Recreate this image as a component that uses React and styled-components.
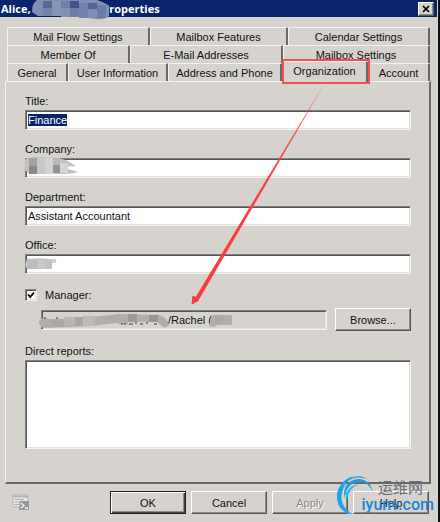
import React, { useEffect, useRef } from "react";
import styled, { createGlobalStyle, css } from "styled-components";

const GlobalStyle = createGlobalStyle`
  * {
    box-sizing: border-box;
  }
  body {
    margin: 0;
    background: #d6d3ce;
  }
  button, input, textarea {
    font: inherit;
    color: inherit;
  }
`;

const sunken = css`
  border: 1px solid;
  border-color: #808080 #f4f3f0 #f4f3f0 #808080;
  box-shadow: inset 1px 1px 0 #55585a, inset -1px -1px 0 #e4e2dd;
`;

const raised = css`
  border: 1px solid;
  border-color: #fff #55585a #55585a #fff;
  box-shadow: inset -1px -1px 0 #8c8a86;
`;

const Window = styled.div`
  position: relative;
  display: flex;
  flex-direction: column;
  min-height: 100vh;
  background: #d6d3ce;
  border-right: 2px solid #111;
  font-family: "Liberation Sans", Arial, sans-serif;
  font-size: 11px;
  line-height: 14px;
  color: #111;
  overflow: hidden;
`;

const TitleBar = styled.header`
  display: flex;
  justify-content: space-between;
  align-items: center;
  height: 17px;
  padding: 0 3px 0 1px;
  margin-right: 1px;
  background: #08246b;
`;

const Caption = styled.h1`
  display: flex;
  gap: 66px;
  margin: 0;
  font-family: "Open Sans", sans-serif;
  font-size: 11px;
  font-weight: 700;
  line-height: 16px;
  color: #fff;
`;

const CloseButton = styled.button`
  ${raised}
  display: flex;
  align-items: center;
  justify-content: center;
  width: 16px;
  height: 14px;
  padding: 0;
  background: #d6d3ce;
`;

const Tabs = styled.nav`
  padding: 10px 8px 0 7px;
`;

const TabRow = styled.div`
  display: grid;
  grid-template-columns: ${(p) => p.$columns};
`;

const Tab = styled.button`
  position: relative;
  height: 18px;
  padding: 1px 0 0;
  border: solid;
  border-width: 1px 2px 0 1px;
  border-color: #f4f3f0 #66686a #f4f3f0 #f4f3f0;
  border-radius: 2px 2px 0 0;
  background: #d6d3ce;
  line-height: 14px;
  white-space: nowrap;

  ${(p) =>
    p.$active &&
    css`
      z-index: 1;
      height: 21px;
      margin: -2px 0 -1px;
      padding-bottom: 3px;
    `}
`;

const Marker = styled.span`
  position: absolute;
  inset: -3px -4px -2px -1px;
  border: 2px solid #f25050;
`;

const Panel = styled.main`
  display: flex;
  flex-direction: column;
  flex: 1;
  margin: 0 7px 0 5px;
  padding: 12px 18px 33px 19px;
  border: solid;
  border-width: 1px 2px 2px 1px;
  border-color: #f4f3f0 #66686a #66686a #f4f3f0;
`;

const Field = styled.div`
  display: flex;
  flex-direction: column;
  gap: 2px;
  margin-bottom: 12px;
`;

const Label = styled.label`
  line-height: 14px;
`;

const TextBox = styled.input`
  ${sunken}
  width: 100%;
  height: 20px;
  padding: 1px 2px;
  background: ${(p) => (p.readOnly ? "#d6d3ce" : "#fff")};
  outline: none;

  &::selection {
    background: #08246b;
    color: #fff;
  }
`;

const CheckRow = styled.div`
  display: flex;
  align-items: center;
  gap: 8px;
  height: 14px;
  margin-top: 2px;
`;

const CheckBox = styled.input`
  ${sunken}
  appearance: none;
  width: 12px;
  height: 12px;
  margin: 0;
  background: #fff;

  &:checked {
    background: #fff
      url("data:image/svg+xml,%3Csvg xmlns='http://www.w3.org/2000/svg' viewBox='0 0 10 10'%3E%3Cpath d='M2 4.5 4.2 7 8 2.5' fill='none' stroke='%23000' stroke-width='1.8'/%3E%3C/svg%3E");
  }
`;

const ManagerRow = styled.div`
  display: flex;
  align-items: center;
  gap: 8px;
  margin: 6px 0 13px 16px;

  input {
    flex: 1;
    min-width: 0;
    padding-left: 126px;
  }
`;

const Button = styled.button`
  ${raised}
  width: 76px;
  height: 23px;
  padding: 0;
  background: #d6d3ce;

  &:disabled {
    color: #8c8a86;
    text-shadow: 1px 1px 0 #fff;
  }

  ${(p) =>
    p.$primary &&
    css`
      border-color: #222;
      box-shadow: inset 1px 1px 0 #fff, inset -1px -1px 0 #44474a,
        inset -2px -2px 0 #8c8a86;
    `}
`;

const Reports = styled.textarea`
  ${sunken}
  display: block;
  flex: 1;
  width: 100%;
  min-height: 89px;
  margin-top: 2px;
  background: #fff;
  resize: none;
  outline: none;
`;

const Footer = styled.footer`
  display: flex;
  align-items: center;
  gap: 5px;
  padding: 7px 9px 8px 12px;
`;

const ScriptIcon = styled.svg`
  width: 18px;
  height: 18px;
  margin-right: auto;
`;

const Overlay = styled.svg`
  position: absolute;
  top: 0;
  left: 0;
  z-index: 2;
  pointer-events: none;
`;

const Watermark = styled.div`
  position: absolute;
  right: 4px;
  bottom: 5px;
  z-index: 3;
  width: 98px;
  height: 42px;
  pointer-events: none;

  svg {
    position: absolute;
    top: 0;
    left: 0;
  }
`;

const SiteName = styled.div`
  padding-top: 4px;
  font-family: "Noto Sans CJK SC", sans-serif;
  font-size: 15px;
  line-height: 16px;
  text-align: right;
  padding-right: 11px;
  color: #6c6c75;
`;

const SiteUrl = styled.div`
  font-family: Roboto, sans-serif;
  font-size: 16px;
  font-weight: 500;
  line-height: 20px;
  text-align: right;
  color: #1c84d8;
`;

const fields = [
  { id: "title", label: "Title:", value: "Finance" },
  { id: "company", label: "Company:", value: "" },
  { id: "department", label: "Department:", value: "Assistant Accountant" },
  { id: "office", label: "Office:", value: "" },
];

const tabRows = [
  {
    columns: "143fr 138fr 142fr",
    tabs: ["Mail Flow Settings", "Mailbox Features", "Calendar Settings"],
  },
  {
    columns: "123fr 153fr 147fr",
    tabs: ["Member Of", "E-Mail Addresses", "Mailbox Settings"],
  },
  {
    columns: "61fr 100fr 114fr 86fr 62fr",
    tabs: [
      "General",
      "User Information",
      "Address and Phone",
      "Organization",
      "Account",
    ],
  },
];

// [x, y, width, height, color]
const smudges = [
  [43, 1, 9, 7, "#566a9a"],
  [43, 8, 9, 8, "#7384aa"],
  [52, 1, 9, 15, "#8795b6"],
  [61, 1, 9, 7, "#6e80a8"],
  [61, 8, 9, 9, "#8391b2"],
  [70, 1, 9, 7, "#3f568d"],
  [70, 8, 9, 9, "#6b7da6"],
  [79, 3, 9, 15, "#7183ab"],
  [88, 3, 9, 6, "#4f6598"],
  [88, 9, 9, 9, "#8190b0"],
  [97, 5, 9, 13, "#6b7ca5"],
  [29, 158, 8, 8, "#a2a2a2"],
  [29, 166, 8, 8, "#898989"],
  [37, 158, 8, 16, "#c8c8c8"],
  [45, 158, 8, 16, "#d2d2d2"],
  [53, 158, 7, 7, "#b8b8b8"],
  [53, 165, 7, 8, "#929292"],
  [60, 163, 8, 10, "#d5d5d5"],
  [27, 260, 11, 9, "#bcbcbc"],
  [38, 260, 7, 9, "#c9c9c9"],
  [45, 261, 7, 8, "#c2c2c2"],
  [52, 259, 4, 4, "#d0d0d0"],
  [52, 319, 12, 8, "#aaa9a6"],
  [64, 317, 11, 9, "#b8b6b2"],
  [75, 317, 8, 9, "#a9a7a4"],
  [83, 316, 12, 10, "#bcbab6"],
  [118, 315, 10, 9, "#b0aeab"],
  [128, 314, 9, 8, "#9c9a97"],
  [137, 315, 12, 7, "#b1afac"],
  [149, 315, 9, 7, "#989693"],
  [215, 315, 8, 9, "#aaa8a4"],
  [223, 315, 9, 10, "#b0aeaa"],
];

const Smudges = () => (
  <Overlay width="240" height="340" aria-hidden="true">
    <path
      d="M37 0h60q9 3 12 6v10q-4 4-13 3l-24-3H38l-6-4q0-9 5-12z"
      fill="#8190b2"
    />
    <path
      d="M25 160q3-4 16-3 18 0 27 4l8 5-14 1 16 5q-6 2-18 2l-32-1-4-4z"
      fill="#c3c2c0"
    />
    <path d="M27 259q14-2 30 1l-5 2v7H27q-3-4 0-10z" fill="#c4c4c3" />
    <path
      d="M43 318q18 3 42-1 20-1 34-3l40 1q9 3 10 10-4 4-7 1l-5-4-32 0-34 4-48 2q-8-6 0-10z"
      fill="#b0aeab"
    />
    <path d="M212 315h20v10h-15q-4 4-8 0z" fill="#b2b0ac" />
    {smudges.map(([x, y, width, height, fill]) => (
      <rect key={`${x}-${y}`} x={x} y={y} width={width} height={height} fill={fill} />
    ))}
    <path
      d="M45 317v2M57 317v2M122 325v-2M125 325v-2M129 324h4M136 324v-2M140 324h3M147 324v-2M154 324h3"
      stroke="#333"
      fill="none"
    />
  </Overlay>
);

const Arrow = () => (
  <Overlay width="440" height="310" aria-hidden="true">
    <defs>
      <linearGradient id="trail" x1="323" y1="88" x2="270" y2="176" gradientUnits="userSpaceOnUse">
        <stop offset="0" stopColor="#fb3a3a" stopOpacity="0.1" />
        <stop offset="0.5" stopColor="#fb3a3a" stopOpacity="0.8" />
        <stop offset="1" stopColor="#fb3a3a" />
      </linearGradient>
    </defs>
    <path d="M323 86 199 299 196 297Z" fill="url(#trail)" stroke="url(#trail)" strokeWidth="0.6" />
    <path d="M192 304 193 296 199 300Z" fill="#fb3a3a" stroke="#fb3a3a" />
  </Overlay>
);

const App = () => {
  const titleRef = useRef(null);

  useEffect(() => {
    titleRef.current.focus();
    titleRef.current.select();
  }, []);

  return (
    <Window>
      <GlobalStyle />
      <TitleBar>
        <Caption>
          <span>Alice, '</span>
          <span>Properties</span>
        </Caption>
        <CloseButton aria-label="Close">
          <svg width="8" height="8" viewBox="0 0 8 8">
            <path d="M1 1 7 7M7 1 1 7" stroke="#000" strokeWidth="1.7" />
          </svg>
        </CloseButton>
      </TitleBar>

      <Tabs>
        {tabRows.map((row) => (
          <TabRow key={row.columns} $columns={row.columns}>
            {row.tabs.map((name) => (
              <Tab key={name} $active={name === "Organization"}>
                {name}
                {name === "Organization" && <Marker />}
              </Tab>
            ))}
          </TabRow>
        ))}
      </Tabs>

      <Panel>
        {fields.map((field) => (
          <Field key={field.id}>
            <Label htmlFor={field.id}>{field.label}</Label>
            <TextBox
              id={field.id}
              ref={field.id === "title" ? titleRef : null}
              defaultValue={field.value}
            />
          </Field>
        ))}
        <CheckRow>
          <CheckBox type="checkbox" id="hasManager" defaultChecked />
          <Label htmlFor="hasManager">Manager:</Label>
        </CheckRow>
        <ManagerRow>
          <TextBox readOnly aria-label="Manager name" value="/Rachel (" />
          <Button>Browse...</Button>
        </ManagerRow>
        <Label htmlFor="reports">Direct reports:</Label>
        <Reports id="reports" readOnly />
      </Panel>

      <Footer>
        <ScriptIcon viewBox="0 0 18 18">
          <path d="M1 1h15v12H1z" fill="#e6e5e7" stroke="#b4b3b8" />
          <path d="M1 2.5h15" stroke="#b4b3b8" strokeWidth="2" />
          <path d="M3 5.5h9M3 8h5M3 10.5h4" stroke="#aaa9b0" />
          <path d="M8 7h9v9H7z" fill="#96969c" />
          <path d="m9 9 3 2.5-3 2.5M13 14h3" stroke="#f4f4f6" strokeWidth="1.3" fill="none" />
        </ScriptIcon>
        <Button $primary>OK</Button>
        <Button>Cancel</Button>
        <Button disabled>Apply</Button>
        <Button>Help</Button>
      </Footer>

      <Smudges />
      <Arrow />
      <Watermark>
        <svg width="42" height="42" viewBox="0 0 42 42">
          <path d="M18 1C5 4-2 17 2 28c2 7 8 11 15 11C7 34 3 25 7 15 9 8 13 4 18 1Z" fill="#18a5ea" />
          <path d="M8 19C8 10 15 4 23 4c7 0 12 5 14 13C33 9 28 6 22 7 14 8 9 14 9 24Z" fill="#2598dc" />
          <path d="M9 8C16 0 26-1 32 5 25 1 17 2 9 8Z" fill="#2389cb" />
          <path d="M10 21c1-8 7-12 13-11-6 1-10 5-12 15Z" fill="#33b5ef" />
        </svg>
        <SiteName>运维网</SiteName>
        <SiteUrl>iyunv.com</SiteUrl>
      </Watermark>
    </Window>
  );
};

export default App;
